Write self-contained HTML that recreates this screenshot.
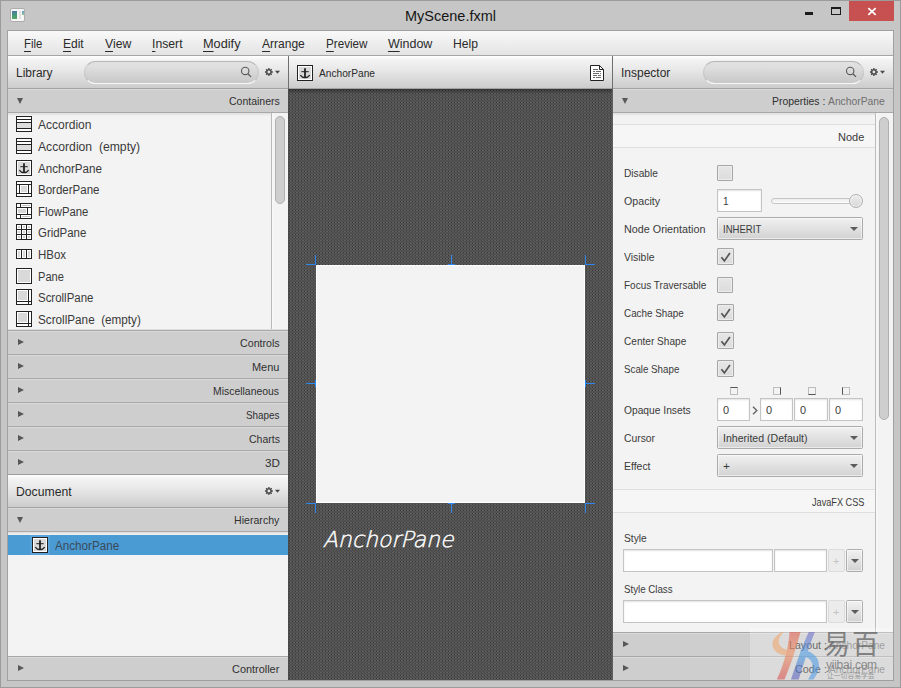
<!DOCTYPE html>
<html>
<head>
<meta charset="utf-8">
<title>MyScene.fxml</title>
<style>
html,body{margin:0;padding:0;}
body{width:901px;height:688px;overflow:hidden;background:#c6c6c6;font-family:"Liberation Sans",sans-serif;font-size:12px;color:#2b2b2b;position:relative;}
.a{position:absolute;box-sizing:border-box;}
.tx{position:absolute;white-space:nowrap;line-height:20px;height:20px;font-family:"Liberation Sans",sans-serif;transform-origin:0 50%;} .tx u{text-decoration:underline;text-underline-offset:3px;text-decoration-thickness:1px;}
.hdr{background:linear-gradient(#ffffff 0%,#f3f3f3 12%,#e9e9e9 40%,#dadada 72%,#cccccc 100%);height:32px;top:56px;}
.hl{height:1px;background:#a3a3a3;}
.tp{height:23px;background:#cecece;box-shadow:inset 0 1px 0 #d9d9d9;}
.tpb{height:1px;background:#a8a8a8;}
.ar{width:0;height:0;border-left:6px solid #585858;border-top:3px solid transparent;border-bottom:3px solid transparent;}
.ad{width:0;height:0;border-top:6px solid #585858;border-left:3px solid transparent;border-right:3px solid transparent;}
.search{height:23px;top:61px;border-radius:12px;background:rgba(0,0,0,.055);border:1px solid rgba(0,0,0,.07);border-top-color:rgba(0,0,0,.2);border-bottom-color:rgba(255,255,255,.85);}
.thumb{background:#cecece;border:1px solid #b0b0b0;border-radius:5px;width:10px;}
.cb{left:717px;width:16px;height:16px;border:1px solid #a6a6a6;border-radius:1px;background:linear-gradient(#e6e6e6,#dcdcdc);box-shadow:inset 0 0 0 1px #ececec;}
.tf{border:1px solid #c4c4c4;background:#fff;box-shadow:inset 0 1px 2px #e2e2e2;}
.combo{border:1px solid #ababab;border-radius:1.500px;background:linear-gradient(#f1f1f1,#dddddd 65%,#d2d2d2);box-shadow:inset 0 0 0 1px rgba(255,255,255,.55);}
.ca{width:0;height:0;border-top:4.5px solid #5c5c5c;border-left:4px solid transparent;border-right:4px solid transparent;margin-left:-.5px;}
.sect{left:613px;width:262px;height:24px;background:#f6f6f6;border-top:1px solid #dedede;border-bottom:1px solid #dedede;}
.ico{left:16px;width:16px;height:16px;}
.hv{background:#2e86ef;width:1px;height:10px;}
.hh{background:#2e86ef;width:10px;height:1px;}
</style>
</head>
<body>
<!-- window frame -->
<div class="a" style="left:0;top:0;width:901px;height:688px;border:1px solid #9b9b9b;"></div>
<div class="a" style="left:7px;top:30px;width:887px;height:651px;border:1px solid #a0a0a0;background:#f2f2f2;"></div>
<!-- window icon -->
<div class="a" style="left:10px;top:8px;width:15px;height:14px;background:#f6f6f6;border:1px solid #adadad;border-radius:2px;"></div>
<div class="a" style="left:12px;top:11px;width:5px;height:8px;background:linear-gradient(#4a78a8,#4a9a78 55%,#52a862);"></div>
<div class="a" style="left:19px;top:11px;width:2px;height:8px;background:#e2e2e2;"></div>
<div class="a" style="left:22px;top:11px;width:2px;height:4px;background:linear-gradient(#6a98c8,#8cc890);"></div>
<!-- window buttons -->
<div class="a" style="left:805px;top:12px;width:8px;height:3px;background:#1c1c1c;"></div>
<div class="a" style="left:831px;top:7px;width:10px;height:8px;border:1px solid #1c1c1c;border-top-width:2px;"></div>
<div class="a" style="left:849px;top:1px;width:45px;height:20px;background:#c75050;"></div>
<svg class="a" style="left:867px;top:7px" width="10" height="9" viewBox="0 0 10 9"><path d="M1.300 1.100L8.700 7.900M8.700 1.100L1.300 7.900" stroke="#fff" stroke-width="1.700" fill="none"/></svg>

<!-- menubar -->
<div class="a" style="left:8px;top:31px;width:885px;height:24px;background:linear-gradient(#f9f9f9,#eeeeee 50%,#e3e3e3);"></div>
<div class="a hl" style="left:8px;top:55px;width:885px;background:#a6a6a6;"></div>

<!-- headers -->
<div class="a hdr" style="left:8px;width:280px;"></div>
<div class="a hdr" style="left:289px;width:323px;"></div>
<div class="a hdr" style="left:613px;width:280px;"></div>
<div class="a hl" style="left:8px;top:88px;width:885px;"></div>

<!-- canvas -->
<svg class="a" style="left:288px;top:89px" width="325" height="591" shape-rendering="crispEdges">
<defs><pattern id="pt" width="3" height="3" patternUnits="userSpaceOnUse"><rect width="3" height="3" fill="#4f4f4f"/><rect x="0" y="1" width="1" height="1" fill="#5d5d5d"/><rect x="1" y="1" width="1" height="1" fill="#383838"/><rect x="2" y="1" width="1" height="1" fill="#606060"/><rect x="1" y="0" width="1" height="1" fill="#545454"/><rect x="1" y="2" width="1" height="1" fill="#545454"/></pattern></defs>
<rect width="325" height="591" fill="url(#pt)"/>
</svg>
<div class="a" style="left:288px;top:89px;width:325px;height:5px;background:linear-gradient(rgba(0,0,0,.35),rgba(0,0,0,0));"></div>
<!-- dividers -->
<div class="a" style="left:288px;top:56px;width:1px;height:33px;background:#6f6f6f;"></div>
<div class="a" style="left:612px;top:56px;width:1px;height:33px;background:#6f6f6f;"></div>
<div class="a" style="left:288px;top:89px;width:1px;height:591px;background:#4a4a4a;"></div>
<div class="a" style="left:612px;top:89px;width:1px;height:591px;background:#5e5e5e;"></div>

<!-- canvas content -->
<div class="a" style="left:316px;top:265px;width:269px;height:238px;background:#f3f3f3;border:1px solid #fff;"></div>
<div class="a hv" style="left:315px;top:255px;"></div><div class="a hh" style="left:306px;top:264px;"></div>
<div class="a hv" style="left:451px;top:255px;height:9px;"></div><div class="a hh" style="left:448px;top:264px;width:7px;"></div>
<div class="a hv" style="left:585px;top:255px;"></div><div class="a hh" style="left:585px;top:264px;"></div>
<div class="a hh" style="left:306px;top:383px;width:9px;"></div><div class="a hv" style="left:315px;top:380px;height:7px;"></div>
<div class="a hh" style="left:586px;top:383px;width:9px;"></div><div class="a hv" style="left:585px;top:380px;height:7px;"></div>
<div class="a hv" style="left:315px;top:503px;"></div><div class="a hh" style="left:306px;top:503px;"></div>
<div class="a hv" style="left:451px;top:504px;height:9px;"></div><div class="a hh" style="left:448px;top:503px;width:7px;"></div>
<div class="a hv" style="left:585px;top:503px;"></div><div class="a hh" style="left:585px;top:503px;"></div>

<!-- shared symbols -->
<svg width="0" height="0" style="position:absolute">
<defs>
<g id="anchor"><rect x=".5" y=".5" width="15" height="15" fill="#fff" stroke="#222" shape-rendering="crispEdges"/><rect x="2" y="2" width="12" height="12" fill="#d9d9d9" shape-rendering="crispEdges"/><path d="M8 3.200V12.600" stroke="#222" stroke-width="1.800" fill="none"/><path d="M4.300 6.700H11.700" stroke="#222" stroke-width="1" fill="none"/><path d="M3.300 10.200C5 12.600 6.500 12.700 8 12.700C9.500 12.700 11 12.600 12.700 10.200" stroke="#222" stroke-width="1.300" fill="none"/></g>
<g id="gear"><path fill="#484848" fill-rule="evenodd" d="M7.70 4.25L8.85 4.37L8.85 5.63L7.70 5.75L7.41 6.45L8.14 7.35L7.25 8.24L6.35 7.51L5.65 7.80L5.53 8.95L4.27 8.95L4.15 7.80L3.45 7.51L2.55 8.24L1.66 7.35L2.39 6.45L2.10 5.75L0.95 5.63L0.95 4.37L2.10 4.25L2.39 3.55L1.66 2.65L2.55 1.76L3.45 2.49L4.15 2.20L4.27 1.05L5.53 1.05L5.65 2.20L6.35 2.49L7.25 1.76L8.14 2.65L7.41 3.55ZM4.90 3.55a1.45 1.45 0 1 0 0 2.9a1.45 1.45 0 1 0 0 -2.9z"/><path fill="#484848" d="M11 3.800h5l-2.500 3z"/></g>
<g id="chk"><path d="M4.400 9.300L7.400 12.900L12.900 5" fill="none" stroke="#555" stroke-width="1.700"/></g>
</defs>
</svg>
<!-- CENTER HEADER -->
<svg class="a" style="left:297px;top:65px" width="16" height="16" viewBox="0 0 16 16"><use href="#anchor"/></svg>
<svg class="a" style="left:590px;top:65px" width="14" height="16" viewBox="0 0 14 16"><path d="M.500 .500H9.500L13.500 4.500V15.500H.500Z" fill="#fff" stroke="#222"/><path d="M9.500.500V4.500H13.500" fill="none" stroke="#222"/><path d="M3 4.500H8M3 6.500H5M6 6.500H11M3 8.500H9M10 8.500H11M3 10.500H7M8 10.500H11M3 12.500H5M6 12.500H11" stroke="#6a6a6a" shape-rendering="crispEdges"/></svg>

<!-- LEFT PANEL -->
<div class="a search" style="left:84px;width:175px;"></div>
<svg class="a" style="left:239px;top:65px" width="14" height="14" viewBox="0 0 14 14"><circle cx="6.2" cy="5.9" r="3.7" fill="none" stroke="#5a5a5a" stroke-width="1.1"/><path d="M8.9 8.7 L12 11.9" stroke="#5a5a5a" stroke-width="1.3" fill="none"/></svg>
<svg class="a gear" style="left:264px;top:67px" width="18" height="10" viewBox="0 0 18 10"><use href="#gear"/></svg>
<!-- Containers -->
<div class="a tp" style="left:8px;top:89px;width:280px;"></div><div class="a tpb" style="left:8px;top:112px;width:280px;"></div>
<div class="a ad" style="left:17px;top:98px;"></div>
<!-- list -->
<div class="a" style="left:8px;top:113px;width:280px;height:217px;background:#f3f3f3;"></div>
<div class="a" style="left:8px;top:113px;width:280px;height:3px;background:linear-gradient(rgba(0,0,0,.09),rgba(0,0,0,0));"></div>
<div class="a" style="left:271px;top:113px;width:1px;height:217px;background:#b9b9b9;"></div>
<div class="a" style="left:272px;top:113px;width:16px;height:217px;background:linear-gradient(90deg,#f8f8f8,#f3f3f3 3px,#f3f3f3);"></div>
<div class="a thumb" style="left:275px;top:116px;height:88px;"></div>
<div class="a" style="left:8px;top:329px;width:280px;height:1px;background:#dedede;"></div>
<!-- icons -->
<svg class="a ico" style="top:116px" viewBox="0 0 16 16" shape-rendering="crispEdges"><rect x=".5" y=".5" width="15" height="15" fill="#fff" stroke="#222"/><rect x="1" y="7" width="14" height="5" fill="#dcdcdc"/><path d="M1 3.5H15M1 6.5H15M1 12.5H15" stroke="#222"/></svg>
<svg class="a ico" style="top:138px" viewBox="0 0 16 16" shape-rendering="crispEdges"><rect x=".5" y=".5" width="15" height="15" fill="#fff" stroke="#222"/><rect x="1" y="7" width="14" height="5" fill="#dcdcdc"/><path d="M1 3.5H15M1 6.5H15M1 12.5H15" stroke="#222"/></svg>
<svg class="a ico" style="top:160px" viewBox="0 0 16 16"><use href="#anchor"/></svg>
<svg class="a ico" style="top:181px" viewBox="0 0 16 16" shape-rendering="crispEdges"><rect x=".5" y=".5" width="15" height="15" fill="#fff" stroke="#222"/><path d="M1 3.5H15M1 12.5H15M3.5 4V12M12.5 4V12" stroke="#222"/><rect x="5" y="5" width="6" height="6" fill="#d9d9d9"/></svg>
<svg class="a ico" style="top:203px" viewBox="0 0 16 16" shape-rendering="crispEdges"><rect x=".5" y=".5" width="15" height="15" fill="#fff" stroke="#222"/><path d="M1 4.5H15M1 11.5H15M4.500 1V4M11.5 5V11M4.500 12V15" stroke="#222"/><rect x="2" y="6" width="8" height="4" fill="#d6d6d6"/><path d="M6 2.500H14M6 13.5H14" stroke="#c4c4c4"/></svg>
<svg class="a ico" style="top:224px" viewBox="0 0 16 16" shape-rendering="crispEdges"><rect x=".5" y=".5" width="15" height="15" fill="#fff" stroke="#222"/><path d="M1 5.500H15M1 10.5H15M5.500 1V15M10.5 1V15" stroke="#222"/><g fill="#d0d0d0"><rect x="2" y="2" width="2" height="2"/><rect x="7" y="2" width="2" height="2"/><rect x="12" y="2" width="2" height="2"/><rect x="2" y="7" width="2" height="2"/><rect x="7" y="7" width="2" height="2"/><rect x="12" y="7" width="2" height="2"/><rect x="2" y="12" width="2" height="2"/><rect x="7" y="12" width="2" height="2"/><rect x="12" y="12" width="2" height="2"/></g></svg>
<svg class="a ico" style="top:249px;height:10px" viewBox="0 0 16 10" shape-rendering="crispEdges"><rect x=".5" y=".5" width="15" height="9" fill="#fff" stroke="#222"/><path d="M5.500 1V9M10.5 1V9" stroke="#222"/><g fill="#dadada"><rect x="2" y="2" width="2" height="6"/><rect x="7" y="2" width="2" height="6"/><rect x="12" y="2" width="2" height="6"/></g></svg>
<svg class="a ico" style="top:268px" viewBox="0 0 16 16" shape-rendering="crispEdges"><rect x=".5" y=".5" width="15" height="15" fill="#fff" stroke="#222"/><rect x="2" y="2" width="12" height="12" fill="#d9d9d9"/></svg>
<svg class="a ico" style="top:289px" viewBox="0 0 16 16" shape-rendering="crispEdges"><rect x=".5" y=".5" width="15" height="15" fill="#fff" stroke="#222"/><path d="M1 12.5H15M12.5 1V15" stroke="#222"/><rect x="2" y="2" width="9" height="9" fill="#d9d9d9"/></svg>
<svg class="a ico" style="top:311px" viewBox="0 0 16 16" shape-rendering="crispEdges"><rect x=".5" y=".5" width="15" height="15" fill="#fff" stroke="#222"/><path d="M1 12.5H15M12.5 1V15" stroke="#222"/><rect x="2" y="2" width="9" height="9" fill="#d9d9d9"/></svg>
<!-- collapsed panes -->
<div class="a tpb" style="left:8px;top:330px;width:280px;"></div>
<div class="a tp" style="left:8px;top:331px;width:280px;"></div><div class="a tpb" style="left:8px;top:354px;width:280px;"></div><div class="a ar" style="left:18px;top:339px;"></div>
<div class="a tp" style="left:8px;top:355px;width:280px;"></div><div class="a tpb" style="left:8px;top:378px;width:280px;"></div><div class="a ar" style="left:18px;top:363px;"></div>
<div class="a tp" style="left:8px;top:379px;width:280px;"></div><div class="a tpb" style="left:8px;top:402px;width:280px;"></div><div class="a ar" style="left:18px;top:387px;"></div>
<div class="a tp" style="left:8px;top:403px;width:280px;"></div><div class="a tpb" style="left:8px;top:426px;width:280px;"></div><div class="a ar" style="left:18px;top:411px;"></div>
<div class="a tp" style="left:8px;top:427px;width:280px;"></div><div class="a tpb" style="left:8px;top:450px;width:280px;"></div><div class="a ar" style="left:18px;top:435px;"></div>
<div class="a tp" style="left:8px;top:451px;width:280px;"></div><div class="a tpb" style="left:8px;top:474px;width:280px;background:#9c9c9c;"></div><div class="a ar" style="left:18px;top:459px;"></div>
<!-- Document header -->
<div class="a hdr" style="left:8px;top:475px;width:280px;"></div>
<div class="a hl" style="left:8px;top:507px;width:280px;"></div>
<svg class="a gear" style="left:264px;top:486px" width="18" height="10" viewBox="0 0 18 10"><use href="#gear"/></svg>
<!-- Hierarchy -->
<div class="a tp" style="left:8px;top:508px;width:280px;"></div><div class="a tpb" style="left:8px;top:531px;width:280px;"></div>
<div class="a ad" style="left:17px;top:517px;"></div>
<!-- tree -->
<div class="a" style="left:8px;top:532px;width:280px;height:124px;background:#f3f3f3;"></div>
<div class="a" style="left:8px;top:532px;width:280px;height:3px;background:linear-gradient(rgba(0,0,0,.09),rgba(0,0,0,0));"></div>
<div class="a" style="left:8px;top:535px;width:280px;height:20px;background:#4a9ad4;"></div>
<div class="a" style="left:30px;top:535px;width:20px;height:20px;background:#5aa4da;"></div>
<svg class="a" style="left:32px;top:537px" width="16" height="16" viewBox="0 0 16 16"><use href="#anchor"/></svg>
<!-- Controller -->
<div class="a tpb" style="left:8px;top:656px;width:280px;"></div>
<div class="a tp" style="left:8px;top:657px;width:280px;"></div><div class="a ar" style="left:18px;top:665px;"></div>

<!-- RIGHT PANEL -->
<div class="a search" style="left:703px;width:161px;"></div>
<svg class="a" style="left:844px;top:65px" width="14" height="14" viewBox="0 0 14 14"><circle cx="6.200" cy="5.900" r="3.700" fill="none" stroke="#5a5a5a" stroke-width="1.100"/><path d="M8.900 8.700 L12 11.900" stroke="#5a5a5a" stroke-width="1.300" fill="none"/></svg>
<svg class="a gear" style="left:869px;top:67px" width="18" height="10" viewBox="0 0 18 10"><use href="#gear"/></svg>
<!-- Properties pane -->
<div class="a tp" style="left:613px;top:89px;width:280px;"></div><div class="a tpb" style="left:613px;top:112px;width:280px;"></div>
<div class="a ad" style="left:622px;top:98px;"></div>
<!-- content -->
<div class="a" style="left:613px;top:113px;width:280px;height:519px;background:#f3f3f3;"></div>
<div class="a" style="left:613px;top:113px;width:280px;height:3px;background:linear-gradient(rgba(0,0,0,.09),rgba(0,0,0,0));"></div>
<div class="a" style="left:875px;top:113px;width:1px;height:519px;background:#bcbcbc;"></div>
<div class="a" style="left:876px;top:113px;width:17px;height:519px;background:linear-gradient(90deg,#f8f8f8,#f3f3f3 3px,#f3f3f3);"></div>
<div class="a thumb" style="left:879px;top:117px;height:303px;"></div>
<div class="a sect" style="top:124px;"></div>
<div class="a sect" style="top:489px;"></div>
<!-- checkboxes -->
<div class="a cb" style="top:165px;"></div>
<div class="a cb" style="top:248px;width:17px;height:17px;"></div>
<div class="a cb" style="top:277px;"></div>
<div class="a cb" style="top:304px;width:17px;height:17px;"></div>
<div class="a cb" style="top:332px;width:17px;height:17px;"></div>
<div class="a cb" style="top:360px;width:17px;height:17px;"></div>
<svg class="a" style="left:717px;top:248px" width="17" height="17" viewBox="0 0 17 17"><use href="#chk"/></svg>
<svg class="a" style="left:717px;top:304px" width="17" height="17" viewBox="0 0 17 17"><use href="#chk"/></svg>
<svg class="a" style="left:717px;top:332px" width="17" height="17" viewBox="0 0 17 17"><use href="#chk"/></svg>
<svg class="a" style="left:717px;top:360px" width="17" height="17" viewBox="0 0 17 17"><use href="#chk"/></svg>
<!-- opacity -->
<div class="a tf" style="left:717px;top:189px;width:45px;height:23px;"></div>
<div class="a" style="left:771px;top:198px;width:89px;height:6px;border:1px solid #c6c6c6;border-radius:3px;background:linear-gradient(#ececec,#fbfbfb);"></div>
<div class="a" style="left:849px;top:194px;width:14px;height:14px;border:1px solid #b0b0b0;border-radius:7px;background:linear-gradient(#ececec,#d8d8d8);box-shadow:inset 0 0 0 1px rgba(255,255,255,.5);"></div>
<!-- node orientation -->
<div class="a combo" style="left:717px;top:217px;width:146px;height:23px;"></div><div class="a ca" style="left:850px;top:227px;"></div>
<!-- opaque insets -->
<div class="a" style="left:730px;top:387px;width:8px;height:8px;border:1px solid #bdbdbd;border-top:1px solid #555;"></div>
<div class="a" style="left:773px;top:387px;width:8px;height:8px;border:1px solid #bdbdbd;border-right:1px solid #555;"></div>
<div class="a" style="left:808px;top:387px;width:8px;height:8px;border:1px solid #bdbdbd;border-bottom:1px solid #555;"></div>
<div class="a" style="left:842px;top:387px;width:8px;height:8px;border:1px solid #bdbdbd;border-left:1px solid #555;"></div>
<div class="a tf" style="left:717px;top:398px;width:33px;height:23px;"></div>
<div class="a tf" style="left:760px;top:398px;width:33px;height:23px;"></div>
<div class="a tf" style="left:794px;top:398px;width:34px;height:23px;"></div>
<div class="a tf" style="left:829px;top:398px;width:34px;height:23px;"></div>
<svg class="a" style="left:752px;top:406px" width="6" height="9" viewBox="0 0 6 9"><path d="M1 .800L4.800 4.500L1 8.200" fill="none" stroke="#666" stroke-width="1.400"/></svg>
<!-- cursor / effect -->
<div class="a combo" style="left:717px;top:426px;width:146px;height:23px;"></div><div class="a ca" style="left:850px;top:436px;"></div>
<div class="a combo" style="left:717px;top:454px;width:146px;height:23px;"></div><div class="a ca" style="left:850px;top:464px;"></div>
<!-- style -->
<div class="a tf" style="left:623px;top:549px;width:150px;height:23px;"></div>
<div class="a tf" style="left:774px;top:549px;width:53px;height:23px;"></div>
<div class="a" style="left:828px;top:549px;width:17px;height:23px;border:1px solid #dcdcdc;border-radius:2px;background:#ececec;"></div>
<div class="a combo" style="left:846px;top:549px;width:17px;height:23px;border-color:#adadad;"></div><div class="a ca" style="left:851px;top:559px;"></div>
<!-- style class -->
<div class="a tf" style="left:623px;top:600px;width:204px;height:23px;"></div>
<div class="a" style="left:828px;top:600px;width:17px;height:23px;border:1px solid #dcdcdc;border-radius:2px;background:#ececec;"></div>
<div class="a combo" style="left:846px;top:600px;width:17px;height:23px;border-color:#adadad;"></div><div class="a ca" style="left:851px;top:610px;"></div>
<!-- Layout / Code -->
<div class="a tpb" style="left:613px;top:632px;width:280px;"></div>
<div class="a tp" style="left:613px;top:633px;width:280px;"></div><div class="a tpb" style="left:613px;top:656px;width:280px;"></div><div class="a ar" style="left:623px;top:641px;"></div>
<div class="a tp" style="left:613px;top:657px;width:280px;"></div><div class="a ar" style="left:623px;top:665px;"></div>


<span class="tx" style="left:404.8px;top:6px;font-size:15px;color:#151515;transform:scaleX(0.966);">MyScene.fxml</span>
<span class="tx" style="left:24.0px;top:34px;font-size:12.5px;color:#2a2a2a;transform:scaleX(0.908);"><u>F</u>ile</span>
<span class="tx" style="left:62.9px;top:34px;font-size:12.5px;color:#2a2a2a;transform:scaleX(0.961);"><u>E</u>dit</span>
<span class="tx" style="left:104.7px;top:34px;font-size:12.5px;color:#2a2a2a;transform:scaleX(0.978);"><u>V</u>iew</span>
<span class="tx" style="left:151.6px;top:34px;font-size:12.5px;color:#2a2a2a;transform:scaleX(0.978);"><u>I</u>nsert</span>
<span class="tx" style="left:203.3px;top:34px;font-size:12.5px;color:#2a2a2a;transform:scaleX(1.018);"><u>M</u>odify</span>
<span class="tx" style="left:261.6px;top:34px;font-size:12.5px;color:#2a2a2a;transform:scaleX(0.962);"><u>A</u>rrange</span>
<span class="tx" style="left:325.5px;top:34px;font-size:12.5px;color:#2a2a2a;transform:scaleX(0.933);"><u>P</u>review</span>
<span class="tx" style="left:387.9px;top:34px;font-size:12.5px;color:#2a2a2a;"><u>W</u>indow</span>
<span class="tx" style="left:452.6px;top:34px;font-size:12.5px;color:#2a2a2a;transform:scaleX(0.972);">Help</span>
<span class="tx" style="left:16.0px;top:63px;font-size:12.5px;color:#2a2a2a;transform:scaleX(0.955);">Library</span>
<span class="tx" style="left:16.0px;top:482px;font-size:12.5px;color:#2a2a2a;transform:scaleX(0.977);">Document</span>
<span class="tx" style="left:621.2px;top:63px;font-size:12.5px;color:#2a2a2a;transform:scaleX(0.959);">Inspector</span>
<span class="tx" style="left:319.2px;top:63px;font-size:11.2px;color:#2a2a2a;transform:scaleX(0.909);">AnchorPane</span>
<span class="tx" style="left:228.5px;top:91px;font-size:11.2px;color:#303030;transform:scaleX(0.939);">Containers</span>
<span class="tx" style="left:239.8px;top:333px;font-size:11.2px;color:#303030;transform:scaleX(0.953);">Controls</span>
<span class="tx" style="left:252.1px;top:357px;font-size:11.2px;color:#303030;transform:scaleX(0.979);">Menu</span>
<span class="tx" style="left:213.0px;top:381px;font-size:11.2px;color:#303030;transform:scaleX(0.932);">Miscellaneous</span>
<span class="tx" style="left:246.0px;top:405px;font-size:11.2px;color:#303030;transform:scaleX(0.883);">Shapes</span>
<span class="tx" style="left:248.6px;top:429px;font-size:11.2px;color:#303030;transform:scaleX(0.938);">Charts</span>
<span class="tx" style="left:264.6px;top:453px;font-size:11.2px;color:#303030;transform:scaleX(1.041);">3D</span>
<span class="tx" style="left:234.1px;top:510px;font-size:11.2px;color:#303030;transform:scaleX(0.948);">Hierarchy</span>
<span class="tx" style="left:231.6px;top:659px;font-size:11.2px;color:#303030;transform:scaleX(0.975);">Controller</span>
<span class="tx" style="left:772.1px;top:91px;font-size:11.2px;color:#303030;transform:scaleX(0.933);">Properties :</span>
<span class="tx" style="left:827.9px;top:91px;font-size:11.2px;color:#6e6e6e;transform:scaleX(0.922);">AnchorPane</span>
<span class="tx" style="left:788.5px;top:635px;font-size:11.2px;color:#303030;transform:scaleX(0.954);">Layout :</span>
<span class="tx" style="left:828.7px;top:635px;font-size:11.2px;color:#7a7a7a;transform:scaleX(0.909);">AnchorPane</span>
<span class="tx" style="left:794.6px;top:659px;font-size:11.2px;color:#303030;transform:scaleX(0.968);">Code :</span>
<span class="tx" style="left:828.7px;top:659px;font-size:11.2px;color:#7a7a7a;transform:scaleX(0.909);">AnchorPane</span>
<span class="tx" style="left:38.1px;top:115px;font-size:12.5px;color:#3a3a3a;transform:scaleX(0.962);">Accordion</span>
<span class="tx" style="left:38.1px;top:137px;font-size:12.5px;color:#3a3a3a;transform:scaleX(0.974);">Accordion&nbsp; (empty)</span>
<span class="tx" style="left:38.1px;top:159px;font-size:12.5px;color:#3a3a3a;transform:scaleX(0.930);">AnchorPane</span>
<span class="tx" style="left:38.1px;top:180px;font-size:12.5px;color:#3a3a3a;transform:scaleX(0.922);">BorderPane</span>
<span class="tx" style="left:38.1px;top:202px;font-size:12.5px;color:#3a3a3a;transform:scaleX(0.905);">FlowPane</span>
<span class="tx" style="left:38.1px;top:223px;font-size:12.5px;color:#3a3a3a;transform:scaleX(0.915);">GridPane</span>
<span class="tx" style="left:38.1px;top:245px;font-size:12.5px;color:#3a3a3a;transform:scaleX(0.919);">HBox</span>
<span class="tx" style="left:38.1px;top:267px;font-size:12.5px;color:#3a3a3a;transform:scaleX(0.887);">Pane</span>
<span class="tx" style="left:38.1px;top:288px;font-size:12.5px;color:#3a3a3a;transform:scaleX(0.916);">ScrollPane</span>
<span class="tx" style="left:38.1px;top:310px;font-size:12.5px;color:#3a3a3a;transform:scaleX(0.937);">ScrollPane&nbsp; (empty)</span>
<span class="tx" style="left:54.8px;top:536px;font-size:12.5px;color:#3b4a58;transform:scaleX(0.932);">AnchorPane</span>
<span class="tx" style="left:322.8px;top:530px;font-size:22px;color:#ffffff;font-family:'DejaVu Sans Light','Liberation Sans',sans-serif;font-style:italic;-webkit-text-stroke:.45px #fff;text-shadow:0 0 1px rgba(0,0,0,.3);">AnchorPane</span>
<span class="tx" style="left:624.1px;top:163px;font-size:11.2px;color:#3a3a3a;transform:scaleX(0.909);">Disable</span>
<span class="tx" style="left:624.1px;top:191px;font-size:11.2px;color:#3a3a3a;transform:scaleX(0.952);">Opacity</span>
<span class="tx" style="left:624.1px;top:219px;font-size:11.2px;color:#3a3a3a;transform:scaleX(0.963);">Node Orientation</span>
<span class="tx" style="left:624.1px;top:247px;font-size:11.2px;color:#3a3a3a;transform:scaleX(0.931);">Visible</span>
<span class="tx" style="left:624.1px;top:275px;font-size:11.2px;color:#3a3a3a;transform:scaleX(0.895);">Focus Traversable</span>
<span class="tx" style="left:624.1px;top:303px;font-size:11.2px;color:#3a3a3a;transform:scaleX(0.882);">Cache Shape</span>
<span class="tx" style="left:624.1px;top:331px;font-size:11.2px;color:#3a3a3a;transform:scaleX(0.902);">Center Shape</span>
<span class="tx" style="left:624.1px;top:359px;font-size:11.2px;color:#3a3a3a;transform:scaleX(0.872);">Scale Shape</span>
<span class="tx" style="left:624.1px;top:400px;font-size:11.2px;color:#3a3a3a;transform:scaleX(0.916);">Opaque Insets</span>
<span class="tx" style="left:624.1px;top:428px;font-size:11.2px;color:#3a3a3a;transform:scaleX(0.923);">Cursor</span>
<span class="tx" style="left:624.1px;top:456px;font-size:11.2px;color:#3a3a3a;transform:scaleX(0.933);">Effect</span>
<span class="tx" style="left:624.1px;top:528px;font-size:11.2px;color:#3a3a3a;transform:scaleX(0.913);">Style</span>
<span class="tx" style="left:624.1px;top:579px;font-size:11.2px;color:#3a3a3a;transform:scaleX(0.868);">Style Class</span>
<span class="tx" style="left:838.1px;top:127px;font-size:11.2px;color:#3a3a3a;transform:scaleX(0.983);">Node</span>
<span class="tx" style="left:811.5px;top:492px;font-size:11.2px;color:#3a3a3a;transform:scaleX(0.818);">JavaFX CSS</span>
<span class="tx" style="left:722.7px;top:191px;font-size:11.2px;color:#3c3c3c;transform:scaleX(0.898);">1</span>
<span class="tx" style="left:722.9px;top:219px;font-size:11.2px;color:#3a3a3a;transform:scaleX(0.854);">INHERIT</span>
<span class="tx" style="left:723.0px;top:400px;font-size:11.2px;color:#3c3c3c;transform:scaleX(0.978);">0</span>
<span class="tx" style="left:766.1px;top:400px;font-size:11.2px;color:#3c3c3c;transform:scaleX(0.978);">0</span>
<span class="tx" style="left:800.0px;top:400px;font-size:11.2px;color:#3c3c3c;transform:scaleX(0.978);">0</span>
<span class="tx" style="left:834.8px;top:400px;font-size:11.2px;color:#3c3c3c;transform:scaleX(0.978);">0</span>
<span class="tx" style="left:722.9px;top:428px;font-size:11.2px;color:#3a3a3a;transform:scaleX(0.944);">Inherited (Default)</span>
<span class="tx" style="left:723.2px;top:456px;font-size:11.2px;color:#3a3a3a;transform:scaleX(1.054);">+</span>
<span class="tx" style="left:833.3px;top:551px;font-size:11.2px;color:#c4c4c4;transform:scaleX(0.978);">+</span>
<span class="tx" style="left:833.3px;top:602px;font-size:11.2px;color:#c4c4c4;transform:scaleX(0.978);">+</span>
<!-- watermark -->
<div class="a" style="left:750px;top:628px;width:143px;height:52px;background:rgba(255,255,255,.28);"></div>
<svg class="a" style="left:770px;top:630px;opacity:.56" width="54" height="50" viewBox="0 0 54 50">
<defs><linearGradient id="wg1" x1="0" y1="0" x2="0" y2="1"><stop offset="0" stop-color="#e0564a"/><stop offset=".45" stop-color="#ee8a58"/><stop offset="1" stop-color="#d84848"/></linearGradient>
<linearGradient id="wg2" x1="0" y1="0" x2="0" y2="1"><stop offset="0" stop-color="#6e66c4"/><stop offset=".5" stop-color="#3f97e4"/><stop offset="1" stop-color="#5a55b8"/></linearGradient></defs>
<path d="M12 2C4.500 6 1 12 3 17.500C5.500 23.500 13 26.500 22.500 25.500L24.500 20C17 21 10.500 18.500 9 13.500C8 9.500 10 5 14 2Z" fill="#f2a468"/>
<path d="M19.500 2L30.500 2C28 12 21 35 14.500 49.500L6.800 49.500C14 35 19 15 19.500 2Z" fill="url(#wg1)"/>
<path d="M38.800 2L44.800 2C40 14 33 36 28.700 49.500L21 49.500C26 34 33 14 38.800 2Z" fill="url(#wg2)"/>
<path d="M31 20C40 20 49 26 49 35C49 41 46 46 43.500 49.500L38 49.500C41 45 43 40 42.500 35.500C42 29.500 37 26 29.500 26Z" fill="#4a9ae6"/>
</svg>
<span class="a" style="left:823px;top:630px;font-family:'Liberation Sans','Noto Sans CJK SC',sans-serif;font-size:27px;line-height:30px;color:rgba(95,95,95,.72);white-space:nowrap;letter-spacing:2px;">易百</span>
<span class="a" style="left:826px;top:657px;font-family:'Liberation Sans',sans-serif;font-size:12px;line-height:16px;color:rgba(110,110,110,.75);white-space:nowrap;letter-spacing:-.25px;">yiibai.com</span>
<span class="a" style="left:827px;top:672px;font-family:'Liberation Sans','Noto Sans CJK SC',sans-serif;font-size:6.800px;line-height:7px;color:rgba(120,120,120,.7);white-space:nowrap;">让一切容易学会</span>

</body>
</html>
